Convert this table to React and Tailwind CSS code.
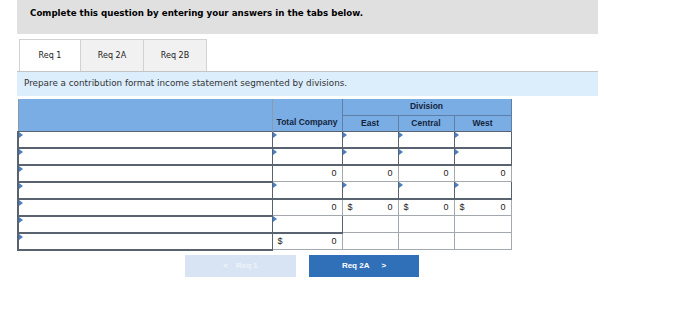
import React from "react";

// rows of the statement: "in" = editable, "" = blank, "$0" = total with a dollar sign
const rows = [
  ["in", "in", "in", "in", "in"],
  ["in", "in", "in", "in", "in"],
  ["in", "0", "0", "0", "0"],
  ["in", "in", "in", "in", "in"],
  ["in", "0", "$0", "$0", "$0"],
  ["in", "in", "", "", ""],
  ["in", "$0", "", "", ""],
];

function Marker() {
  return (
    <span className="absolute left-0 top-0 w-0 h-0 border-t-[3px] border-b-[3px] border-l-[4px] border-t-transparent border-b-transparent border-l-[#4a7fc4]" />
  );
}

function Cell({ kind, first }) {
  if (kind === "in") {
    return (
      <td className={`p-0 border border-[#59626f] border-b-2 ${first ? "border-l-2" : ""}`}>
        <div className="relative h-[15px] bg-white">
          <Marker />
        </div>
      </td>
    );
  }
  if (kind === "") {
    return (
      <td className="p-0 border border-[#a4a9b0]">
        <div className="h-[15px] bg-white" />
      </td>
    );
  }
  const dollar = kind.startsWith("$");
  return (
    <td className="p-0 border border-[#a4a9b0]">
      <div className="h-[15px] flex items-center justify-between px-[5px] bg-white">
        <span>{dollar ? "$" : ""}</span>
        <span>{dollar ? kind.slice(1) : kind}</span>
      </div>
    </td>
  );
}

export default function App() {
  const tabs = ["Req 1", "Req 2A", "Req 2B"];

  return (
    <div className="w-[700px] h-[330px] bg-white font-['DejaVu_Sans',sans-serif] text-[#222]">
      <div className="ml-[17px] w-[581px]">
        <div className="h-[34px] bg-[#e0e0e0] pl-[13px] pt-[7px] text-[8.7px] font-bold text-black">
          Complete this question by entering your answers in the tabs below.
        </div>

        <div className="flex mt-[5px] ml-[2px] h-[32px]">
          {tabs.map((t, i) => (
            <div
              key={t}
              className={`h-[32px] flex items-center justify-center text-[8px] border border-b-0 border-[#d2d2d2] ${
                i === 0 ? "w-[62px] bg-white" : "w-[64px] bg-[#f1f1f1] -ml-px"
              }`}
            >
              {t}
            </div>
          ))}
        </div>

        <div className="h-[25px] bg-[#dcedfb] border-t border-[#c4c4c4] pl-[7px] flex items-center text-[8.8px] text-[#333]">
          Prepare a contribution format income statement segmented by divisions.
        </div>
      </div>

      <table className="ml-[17px] mt-[3px] border-collapse font-['Liberation_Sans',sans-serif] text-[8.5px] text-[#222]">
        <colgroup>
          <col className="w-[254px]" />
          <col className="w-[70px]" />
          <col className="w-[56px]" />
          <col className="w-[56px]" />
          <col className="w-[57px]" />
        </colgroup>
        <thead>
          <tr className="h-[16px] bg-[#79ade3]">
            <td rowSpan={2} className="border-l border-[#8a9bb0]" />
            <td className="border-l border-[#8a9bb0]" />
            <td colSpan={3} className="border-l border-b border-r border-[#5d7ea6] text-center font-bold text-[#14243d]">
              Division
            </td>
          </tr>
          <tr className="h-[16px] bg-[#79ade3] font-bold text-[#14243d] text-center">
            <td className="border-l border-[#8a9bb0]">Total Company</td>
            <td className="border-l border-[#5d7ea6]">East</td>
            <td className="border-l border-[#5d7ea6]">Central</td>
            <td className="border-l border-r border-[#5d7ea6]">West</td>
          </tr>
        </thead>
        <tbody className="text-[9px]">
          {rows.map((r, ri) => (
            <tr key={ri}>
              {r.map((k, ci) => (
                <Cell key={ci} kind={k} first={ci === 0} />
              ))}
            </tr>
          ))}
        </tbody>
      </table>

      <div className="flex ml-[185px] mt-[4px] gap-[13px] font-['Liberation_Sans',sans-serif]">
        <div className="w-[111px] h-[22px] bg-[#d8e4f3] flex items-center justify-center gap-2 text-[8px] font-bold text-[#eef3fa]">
          <span>&lt;</span>
          <span>Req 1</span>
        </div>
        <div className="w-[110px] h-[22px] bg-[#3070b8] flex items-center justify-center gap-3 text-[8px] font-bold text-white">
          <span>Req 2A</span>
          <span>&gt;</span>
        </div>
      </div>
    </div>
  );
}
